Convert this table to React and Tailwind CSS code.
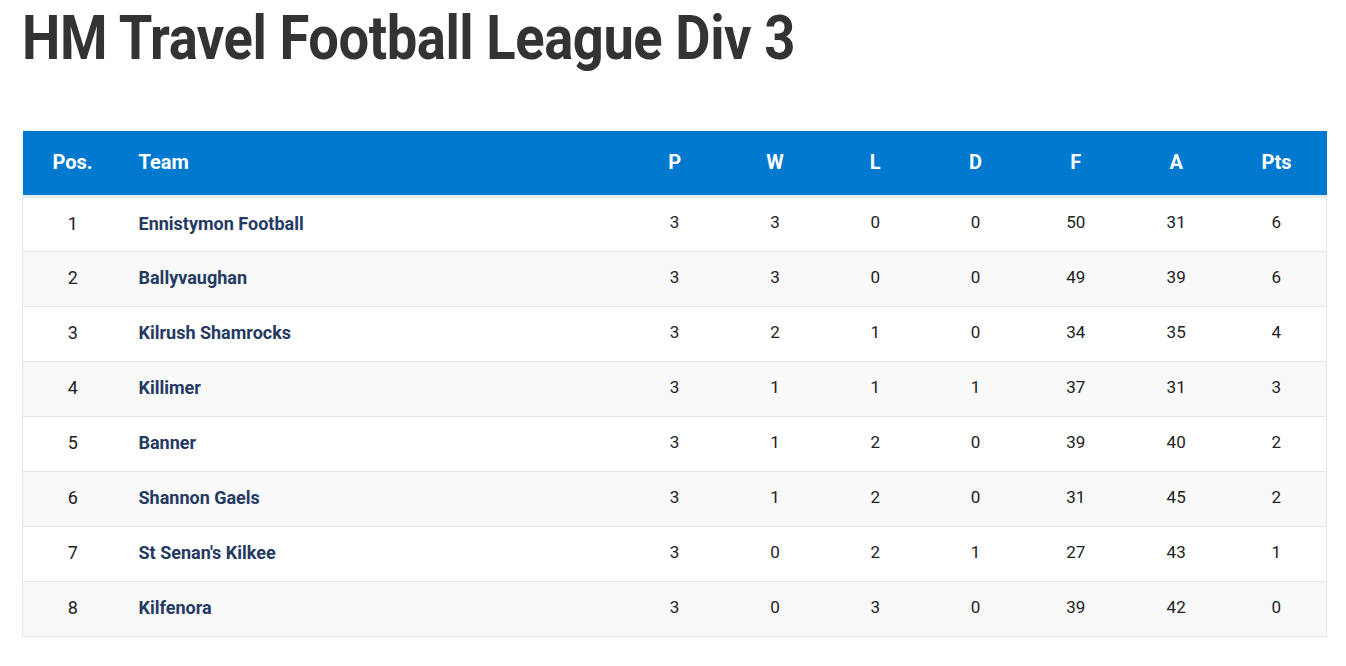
const rows = [
  [1, "Ennistymon Football", 3, 3, 0, 0, 50, 31, 6],
  [2, "Ballyvaughan", 3, 3, 0, 0, 49, 39, 6],
  [3, "Kilrush Shamrocks", 3, 2, 1, 0, 34, 35, 4],
  [4, "Killimer", 3, 1, 1, 1, 37, 31, 3],
  [5, "Banner", 3, 1, 2, 0, 39, 40, 2],
  [6, "Shannon Gaels", 3, 1, 2, 0, 31, 45, 2],
  [7, "St Senan's Kilkee", 3, 0, 2, 1, 27, 43, 1],
  [8, "Kilfenora", 3, 0, 3, 0, 39, 42, 0],
];

const cols = ["P", "W", "L", "D", "F", "A", "Pts"];

export default function App() {
  return (
    <div className="bg-white min-h-[666px] px-[22px] pt-[2px] font-['Roboto',sans-serif]">
      <h1 className="text-[62px] leading-[72px] font-bold text-[#333333] tracking-[-0.5px]">
        <span className="inline-block origin-left scale-x-[0.876] whitespace-nowrap">
          HM Travel Football League Div 3
        </span>
      </h1>
      <table className="mt-[57px] w-[1304px] border-collapse table-fixed">
        <colgroup>
          <col className="w-[100px]" />
          <col className="w-[502px]" />
          {cols.map((c) => (
            <col key={c} className="w-[100.3px]" />
          ))}
        </colgroup>
        <thead>
          <tr className="bg-[#0079cf] h-[65px] text-white text-[20px] font-bold">
            <th className="text-center border-b-[3px] border-[#e6ebef] pb-[1px]">Pos.</th>
            <th className="text-left pl-4 border-b-[3px] border-[#e6ebef] pb-[1px]">Team</th>
            {cols.map((c) => (
              <th key={c} className="text-center border-b-[3px] border-[#e6ebef] pb-[1px]">
                {c}
              </th>
            ))}
          </tr>
        </thead>
        <tbody>
          {rows.map((r, i) => (
            <tr
              key={r[0]}
              className={`h-[55px] border border-[#e6e6e6] text-[18px] text-[#222222] ${
                i % 2 === 1 ? "bg-[#f9f9f9]" : "bg-white"
              }`}
            >
              <td className="text-center pb-[2px]">{r[0]}</td>
              <td className="text-left pl-4 pb-[2px] font-bold text-[#253a63]">{r[1]}</td>
              {r.slice(2).map((v, j) => (
                <td key={j} className="text-center pb-[2px] text-[17px]">
                  {v}
                </td>
              ))}
            </tr>
          ))}
        </tbody>
      </table>
    </div>
  );
}
